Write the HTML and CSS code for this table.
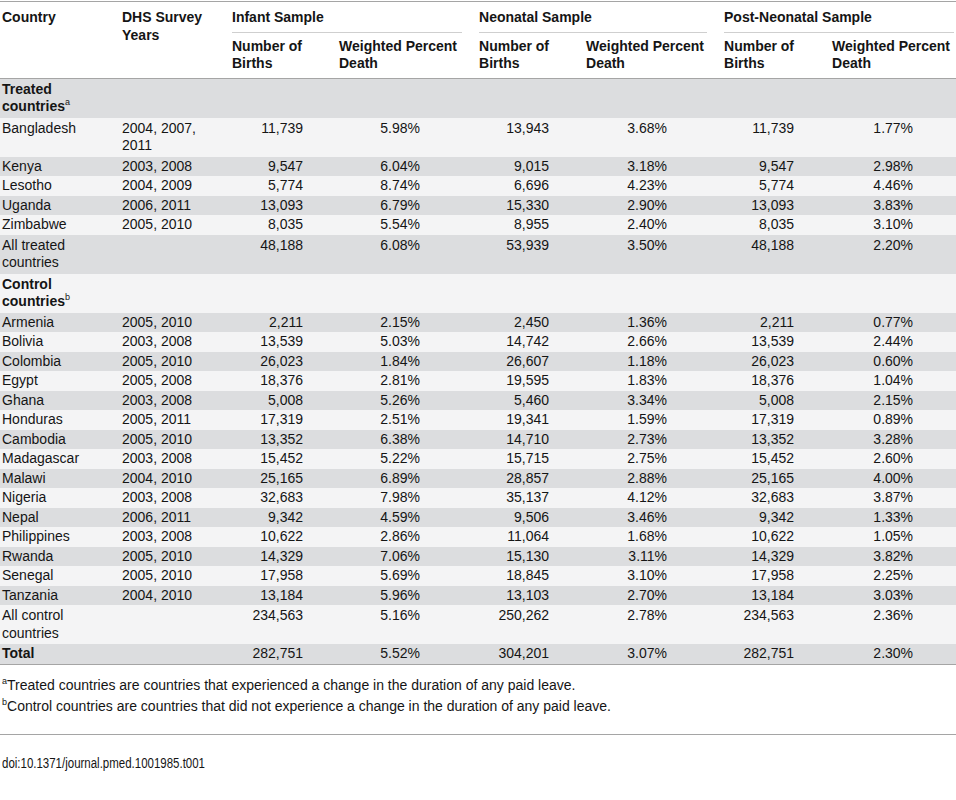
FILE: index.html
```html
<!DOCTYPE html>
<html lang="en">
<head>
  <meta charset="UTF-8">
  <title>Infant, neonatal and post-neonatal samples</title>
  <link rel="stylesheet" href="styles.css">
</head>
<body>
  <div class="table-wrap">
    <table class="data">
      <colgroup>
        <col class="c-country">
        <col class="c-years">
        <col class="c-births">
        <col class="c-pct">
        <col class="c-births">
        <col class="c-pct2">
        <col class="c-births2">
        <col class="c-pct3">
      </colgroup>
      <thead>
        <tr>
          <th rowspan="2" class="first">Country</th>
          <th rowspan="2">DHS Survey Years</th>
          <th colspan="2" class="group"><div>Infant Sample</div></th>
          <th colspan="2" class="group"><div>Neonatal Sample</div></th>
          <th colspan="2" class="group last"><div>Post-Neonatal Sample</div></th>
        </tr>
        <tr class="sub">
          <th>Number of Births</th>
          <th>Weighted Percent Death</th>
          <th>Number of Births</th>
          <th>Weighted Percent Death</th>
          <th>Number of Births</th>
          <th class="last">Weighted Percent Death</th>
        </tr>
      </thead>
      <tbody>
        <tr class="two section"><td class="first"><b>Treated countries</b><sup>a</sup></td><td></td><td></td><td></td><td></td><td></td><td></td><td></td></tr>
        <tr class="two"><td class="first">Bangladesh</td><td>2004, 2007, 2011</td><td class="n1">11,739</td><td class="p1">5.98%</td><td class="n2">13,943</td><td class="p2">3.68%</td><td class="n3">11,739</td><td class="p3">1.77%</td></tr>
        <tr><td class="first">Kenya</td><td>2003, 2008</td><td class="n1">9,547</td><td class="p1">6.04%</td><td class="n2">9,015</td><td class="p2">3.18%</td><td class="n3">9,547</td><td class="p3">2.98%</td></tr>
        <tr><td class="first">Lesotho</td><td>2004, 2009</td><td class="n1">5,774</td><td class="p1">8.74%</td><td class="n2">6,696</td><td class="p2">4.23%</td><td class="n3">5,774</td><td class="p3">4.46%</td></tr>
        <tr><td class="first">Uganda</td><td>2006, 2011</td><td class="n1">13,093</td><td class="p1">6.79%</td><td class="n2">15,330</td><td class="p2">2.90%</td><td class="n3">13,093</td><td class="p3">3.83%</td></tr>
        <tr><td class="first">Zimbabwe</td><td>2005, 2010</td><td class="n1">8,035</td><td class="p1">5.54%</td><td class="n2">8,955</td><td class="p2">2.40%</td><td class="n3">8,035</td><td class="p3">3.10%</td></tr>
        <tr class="two"><td class="first">All treated countries</td><td></td><td class="n1">48,188</td><td class="p1">6.08%</td><td class="n2">53,939</td><td class="p2">3.50%</td><td class="n3">48,188</td><td class="p3">2.20%</td></tr>
        <tr class="two section"><td class="first"><b>Control countries</b><sup>b</sup></td><td></td><td></td><td></td><td></td><td></td><td></td><td></td></tr>
        <tr><td class="first">Armenia</td><td>2005, 2010</td><td class="n1">2,211</td><td class="p1">2.15%</td><td class="n2">2,450</td><td class="p2">1.36%</td><td class="n3">2,211</td><td class="p3">0.77%</td></tr>
        <tr><td class="first">Bolivia</td><td>2003, 2008</td><td class="n1">13,539</td><td class="p1">5.03%</td><td class="n2">14,742</td><td class="p2">2.66%</td><td class="n3">13,539</td><td class="p3">2.44%</td></tr>
        <tr><td class="first">Colombia</td><td>2005, 2010</td><td class="n1">26,023</td><td class="p1">1.84%</td><td class="n2">26,607</td><td class="p2">1.18%</td><td class="n3">26,023</td><td class="p3">0.60%</td></tr>
        <tr><td class="first">Egypt</td><td>2005, 2008</td><td class="n1">18,376</td><td class="p1">2.81%</td><td class="n2">19,595</td><td class="p2">1.83%</td><td class="n3">18,376</td><td class="p3">1.04%</td></tr>
        <tr><td class="first">Ghana</td><td>2003, 2008</td><td class="n1">5,008</td><td class="p1">5.26%</td><td class="n2">5,460</td><td class="p2">3.34%</td><td class="n3">5,008</td><td class="p3">2.15%</td></tr>
        <tr><td class="first">Honduras</td><td>2005, 2011</td><td class="n1">17,319</td><td class="p1">2.51%</td><td class="n2">19,341</td><td class="p2">1.59%</td><td class="n3">17,319</td><td class="p3">0.89%</td></tr>
        <tr><td class="first">Cambodia</td><td>2005, 2010</td><td class="n1">13,352</td><td class="p1">6.38%</td><td class="n2">14,710</td><td class="p2">2.73%</td><td class="n3">13,352</td><td class="p3">3.28%</td></tr>
        <tr><td class="first">Madagascar</td><td>2003, 2008</td><td class="n1">15,452</td><td class="p1">5.22%</td><td class="n2">15,715</td><td class="p2">2.75%</td><td class="n3">15,452</td><td class="p3">2.60%</td></tr>
        <tr><td class="first">Malawi</td><td>2004, 2010</td><td class="n1">25,165</td><td class="p1">6.89%</td><td class="n2">28,857</td><td class="p2">2.88%</td><td class="n3">25,165</td><td class="p3">4.00%</td></tr>
        <tr><td class="first">Nigeria</td><td>2003, 2008</td><td class="n1">32,683</td><td class="p1">7.98%</td><td class="n2">35,137</td><td class="p2">4.12%</td><td class="n3">32,683</td><td class="p3">3.87%</td></tr>
        <tr><td class="first">Nepal</td><td>2006, 2011</td><td class="n1">9,342</td><td class="p1">4.59%</td><td class="n2">9,506</td><td class="p2">3.46%</td><td class="n3">9,342</td><td class="p3">1.33%</td></tr>
        <tr><td class="first">Philippines</td><td>2003, 2008</td><td class="n1">10,622</td><td class="p1">2.86%</td><td class="n2">11,064</td><td class="p2">1.68%</td><td class="n3">10,622</td><td class="p3">1.05%</td></tr>
        <tr><td class="first">Rwanda</td><td>2005, 2010</td><td class="n1">14,329</td><td class="p1">7.06%</td><td class="n2">15,130</td><td class="p2">3.11%</td><td class="n3">14,329</td><td class="p3">3.82%</td></tr>
        <tr><td class="first">Senegal</td><td>2005, 2010</td><td class="n1">17,958</td><td class="p1">5.69%</td><td class="n2">18,845</td><td class="p2">3.10%</td><td class="n3">17,958</td><td class="p3">2.25%</td></tr>
        <tr><td class="first">Tanzania</td><td>2004, 2010</td><td class="n1">13,184</td><td class="p1">5.96%</td><td class="n2">13,103</td><td class="p2">2.70%</td><td class="n3">13,184</td><td class="p3">3.03%</td></tr>
        <tr class="two"><td class="first">All control countries</td><td></td><td class="n1">234,563</td><td class="p1">5.16%</td><td class="n2">250,262</td><td class="p2">2.78%</td><td class="n3">234,563</td><td class="p3">2.36%</td></tr>
        <tr class="total"><td class="first"><b>Total</b></td><td></td><td class="n1">282,751</td><td class="p1">5.52%</td><td class="n2">304,201</td><td class="p2">3.07%</td><td class="n3">282,751</td><td class="p3">2.30%</td></tr>
      </tbody>
    </table>

    <div class="notes">
      <p><sup>a</sup>Treated countries are countries that experienced a change in the duration of any paid leave.</p>
      <p><sup>b</sup>Control countries are countries that did not experience a change in the duration of any paid leave.</p>
    </div>
    <div class="doi"><span>doi:10.1371/journal.pmed.1001985.t001</span></div>
  </div>
</body>
</html>
```

FILE: styles.css
```css
body {
  margin: 0;
  padding: 0;
  background-color: #ffffff;
  color: #151515;
  font-family: "Liberation Sans", Arial, sans-serif;
  font-size: 14px;
}

.table-wrap {
  width: 956px;
  padding-top: 1px;
}

.data {
  width: 956px;
  table-layout: fixed;
  border-collapse: collapse;
  border-top: 1px solid #a5a5a5;
  line-height: 17.5px;
}

.c-country { width: 118px; }
.c-years { width: 110px; }
.c-births { width: 107px; }
.c-pct { width: 140px; }
.c-pct2 { width: 138px; }
.c-births2 { width: 108px; }
.c-pct3 { width: 128px; }

.data thead {
  border-bottom: 1px solid #a5a5a5;
}

.data th {
  text-align: left;
  vertical-align: top;
  font-weight: bold;
  padding: 7px 4px 3px 4px;
}

.data th.first,
.data td.first {
  padding-left: 2px;
}

.data th.group {
  padding: 7px 13px 0 4px;
}

.data th.group.last {
  padding-right: 2px;
}

.data th.group div {
  padding-bottom: 5px;
  border-bottom: 1px solid #cfcfcf;
}

.data tr.sub th {
  padding-top: 5px;
  padding-bottom: 5px;
}

.data tr.sub th.last {
  padding-right: 0;
}

.data tbody {
  border-bottom: 1px solid #a5a5a5;
}

.data td {
  padding: 1px 4px;
  vertical-align: top;
  height: 17.5px;
}

.data tr.two td {
  padding-top: 2px;
  padding-bottom: 2px;
}

.data tbody tr:nth-child(odd) {
  background-color: #dcdddf;
}

.data tbody tr:nth-child(even) {
  background-color: #f4f4f5;
}

.data sup,
.notes sup {
  font-size: 9px;
  line-height: 0;
  vertical-align: 6px;
}

.data sup {
  font-weight: normal;
}

.n1 { text-align: right; padding-right: 32px !important; }
.p1 { text-align: right; padding-right: 55px !important; }
.n2 { text-align: right; padding-right: 33px !important; }
.p2 { text-align: right; padding-right: 53px !important; }
.n3 { text-align: right; padding-right: 34px !important; }
.p3 { text-align: right; padding-right: 43px !important; }

.notes {
  padding: 10px 0 17px 2px;
  border-bottom: 1px solid #a5a5a5;
}

.notes p {
  margin: 0;
  line-height: 21px;
}

.doi {
  padding: 19px 0 0 2px;
  font-size: 14px;
  line-height: 18px;
}

/* the doi line is set in a condensed face */
.doi span {
  display: inline-block;
  transform: scaleX(0.82);
  transform-origin: left center;
}
```
